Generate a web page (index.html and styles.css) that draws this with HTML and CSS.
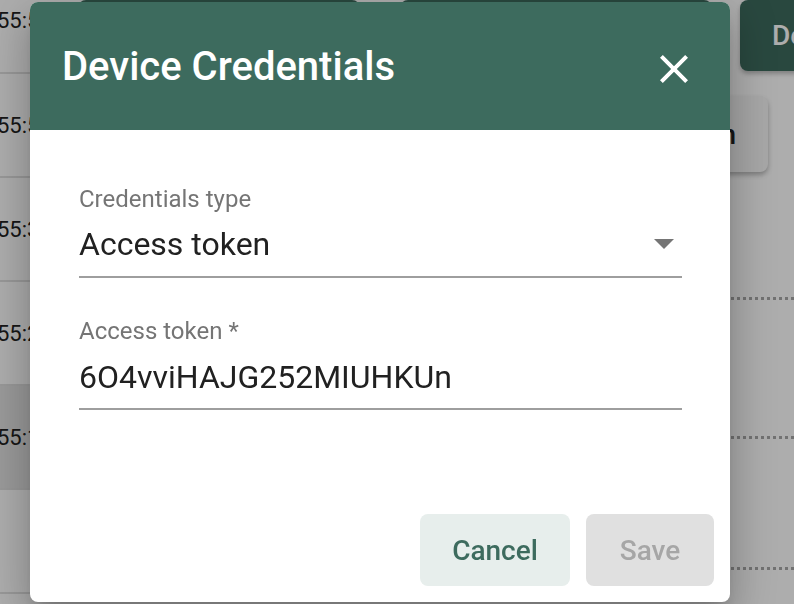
FILE: index.html
```html
<!DOCTYPE html>
<html lang="en">
<head>
<meta charset="utf-8">
<title>Device Credentials</title>
<link rel="stylesheet" href="styles.css">
</head>
<body>
<div class="app">
  <aside class="times">
    <div class="trow first"><span>55:51</span></div>
    <div class="trow"><span>55:52</span></div>
    <div class="trow"><span>55:37</span></div>
    <div class="trow"><span>55:29</span></div>
    <div class="trow hover"><span>55:14</span></div>
    <div class="trow"><span></span></div>
  </aside>
  <main class="main">
    <div class="toolbar">
      <button class="tb tb1">Make public</button>
      <button class="tb tb2">Assign to customer</button>
      <button class="tb tb3">Delete device</button>
    </div>
    <div class="cardrow">
      <div class="card">Copy access token</div>
    </div>
    <div class="details">
      <div class="drow d1"></div>
      <div class="drow d2"></div>
      <div class="drow d3"></div>
    </div>
  </main>
</div>
<div class="overlay"></div>
<div class="dialog" role="dialog">
  <header class="dlg-head">
    <h2 class="dlg-title">Device Credentials</h2>
    <button class="close" aria-label="Close">
      <svg viewBox="0 0 24 24" width="48" height="48"><path fill="#fff" d="M19 6.41L17.59 5 12 10.59 6.41 5 5 6.41 10.59 12 5 17.59 6.41 19 12 13.41 17.59 19 19 17.59 13.41 12z"/></svg>
    </button>
  </header>
  <div class="dlg-body">
    <div class="field">
      <div class="label">Credentials type</div>
      <div class="value select">
        <span>Access token</span>
        <span class="arrow"></span>
      </div>
    </div>
    <div class="field second">
      <div class="label">Access token *</div>
      <div class="value">6O4vviHAJG252MIUHKUn</div>
    </div>
  </div>
  <div class="dlg-actions">
    <button class="btn cancel">Cancel</button>
    <button class="btn save" disabled>Save</button>
  </div>
</div>
</body>
</html>
```
FILE: styles.css
```css
* { box-sizing: border-box; }
html, body { margin: 0; padding: 0; }
body {
  width: 794px;
  height: 604px;
  overflow: hidden;
  background: #fff;
  font-family: Roboto, "Noto Sans", sans-serif;
  color: #212121;
}
button { font-family: inherit; }

.app {
  display: flex;
  height: 604px;
}

.times {
  width: 70px;
  flex: none;
  display: flex;
  flex-direction: column;
  overflow: hidden;
}
.trow {
  height: 104px;
  flex: none;
  display: flex;
  align-items: center;
  border-bottom: 2px solid #e0e0e0;
  font-size: 22px;
  text-indent: -3px;
  white-space: nowrap;
}
.trow.first {
  height: 74px;
  padding-bottom: 32px;
}
.trow.hover { background: #e4e4e4; }

.main {
  flex: 1;
  display: flex;
  flex-direction: column;
  min-width: 0;
}
.toolbar {
  display: flex;
  gap: 40px;
  padding-left: 8px;
  height: 71px;
}
.tb {
  flex: none;
  height: 71px;
  border: none;
  border-radius: 8px;
  background: #3d6b5e;
  color: #fff;
  font-size: 28px;
  font-weight: 500;
  box-shadow: 0 3px 4px rgba(0,0,0,.25);
  text-align: left;
  padding: 0 32px;
  white-space: nowrap;
  overflow: hidden;
}
.tb1 { width: 282px; }
.tb2 { width: 312px; margin-right: -12px; }
.tb3 { width: 240px; }

.cardrow {
  display: flex;
  justify-content: flex-end;
  padding-right: 26px;
  margin-top: 25px;
}
.card {
  height: 76px;
  display: flex;
  align-items: center;
  padding: 0 32px;
  background: #f6f6f6;
  border-radius: 8px;
  box-shadow: 0 3px 5px rgba(0,0,0,.28);
  font-size: 28px;
  font-weight: 500;
  white-space: nowrap;
}

.details {
  display: flex;
  flex-direction: column;
}
.drow { border-bottom: 3px dotted #a8a8a8; }
.d1 { height: 128px; }
.d2 { height: 139px; }
.d3 { height: 131px; }

.overlay {
  position: fixed;
  inset: 0;
  background: rgba(0,0,0,.32);
}

.dialog {
  position: absolute;
  left: 30px;
  top: 2px;
  width: 700px;
  height: 600px;
  background: #fff;
  border-radius: 8px;
  overflow: hidden;
  display: flex;
  flex-direction: column;
  box-shadow: 0 11px 15px -7px rgba(0,0,0,.2), 0 24px 38px 3px rgba(0,0,0,.14), 0 9px 46px 8px rgba(0,0,0,.12);
}
.dlg-head {
  height: 128px;
  flex: none;
  background: #3d6b5e;
  display: flex;
  align-items: center;
  justify-content: space-between;
  padding: 0 32px 0 32px;
}
.dlg-title {
  margin: 0;
  color: #fff;
  font-size: 40px;
  font-weight: 500;
  letter-spacing: 0;
}
.close {
  width: 48px;
  height: 48px;
  padding: 0;
  border: none;
  background: transparent;
  display: flex;
  margin-top: 6px;
}

.dlg-body {
  flex: 1;
  padding: 55px 48px 0 49px;
}
.label {
  font-size: 24px;
  line-height: 28px;
  color: #757575;
}
.value {
  margin-top: 11px;
  font-size: 32px;
  line-height: 40px;
  color: #212121;
  padding-bottom: 12px;
  border-bottom: 2px solid #9e9e9e;
}
.select {
  display: flex;
  align-items: center;
  justify-content: space-between;
}
.arrow {
  width: 0;
  height: 0;
  border-left: 10px solid transparent;
  border-right: 10px solid transparent;
  border-top: 10px solid #757575;
  margin-right: 8px;
}
.field.second { margin-top: 39px; }
.field.second .value { margin-top: 12px; padding-bottom: 11px; }

.dlg-actions {
  display: flex;
  justify-content: flex-end;
  gap: 16px;
  padding: 0 16px 16px 0;
}
.btn {
  height: 72px;
  border: none;
  border-radius: 8px;
  font-size: 28px;
  font-weight: 500;
}
.cancel {
  width: 150px;
  background: #e7eeec;
  color: #3d6b5e;
}
.save {
  width: 128px;
  background: #e0e0e0;
  color: #a6a6a6;
}
```
